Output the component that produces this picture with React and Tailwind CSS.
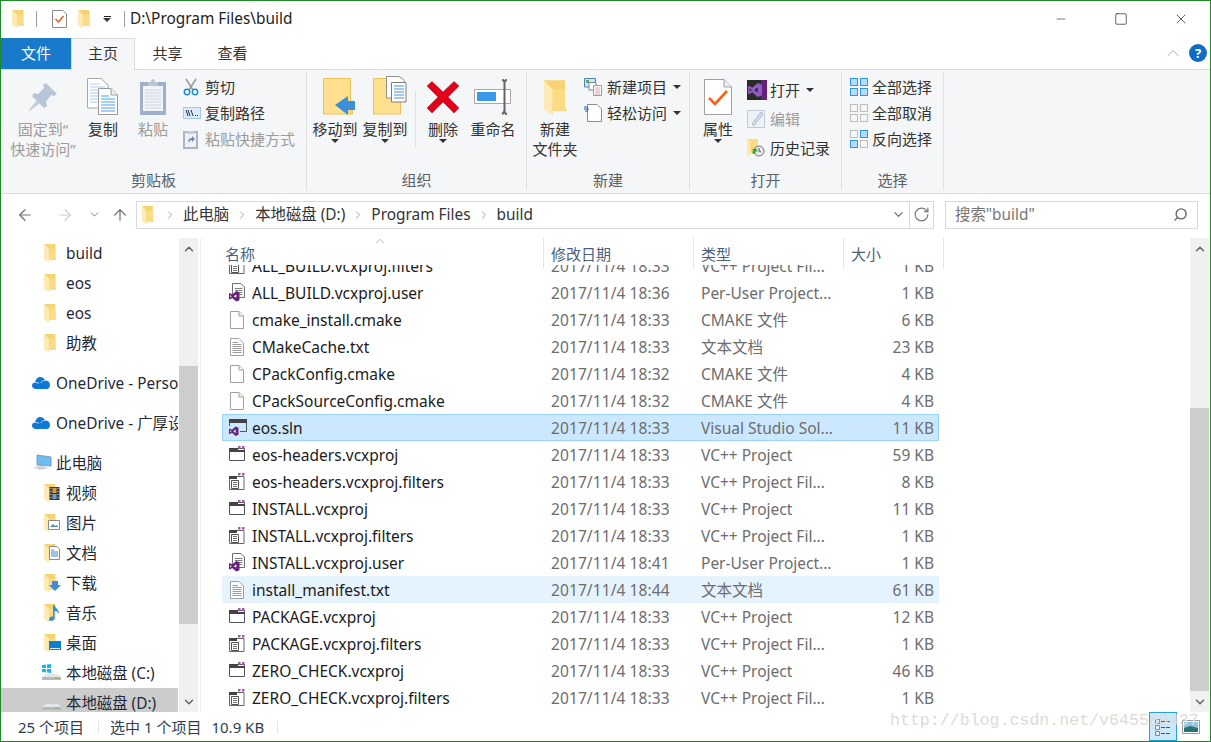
import { ChevronUp, ChevronDown, ChevronRight, ArrowLeft, ArrowRight, ArrowUp, RotateCw, Search, Minus, Square, X } from "lucide-react";

const files = [
  ["filters", "ALL_BUILD.vcxproj.filters", "2017/11/4 18:33", "VC++ Project Fil...", "1 KB"],
  ["user", "ALL_BUILD.vcxproj.user", "2017/11/4 18:36", "Per-User Project...", "1 KB"],
  ["plain", "cmake_install.cmake", "2017/11/4 18:33", "CMAKE 文件", "6 KB"],
  ["text", "CMakeCache.txt", "2017/11/4 18:33", "文本文档", "23 KB"],
  ["plain", "CPackConfig.cmake", "2017/11/4 18:32", "CMAKE 文件", "4 KB"],
  ["plain", "CPackSourceConfig.cmake", "2017/11/4 18:32", "CMAKE 文件", "4 KB"],
  ["sln", "eos.sln", "2017/11/4 18:33", "Visual Studio Sol...", "11 KB", "selected"],
  ["proj", "eos-headers.vcxproj", "2017/11/4 18:33", "VC++ Project", "59 KB"],
  ["filters", "eos-headers.vcxproj.filters", "2017/11/4 18:33", "VC++ Project Fil...", "8 KB"],
  ["proj", "INSTALL.vcxproj", "2017/11/4 18:33", "VC++ Project", "11 KB"],
  ["filters", "INSTALL.vcxproj.filters", "2017/11/4 18:33", "VC++ Project Fil...", "1 KB"],
  ["user", "INSTALL.vcxproj.user", "2017/11/4 18:41", "Per-User Project...", "1 KB"],
  ["text", "install_manifest.txt", "2017/11/4 18:44", "文本文档", "61 KB", "hover"],
  ["proj", "PACKAGE.vcxproj", "2017/11/4 18:33", "VC++ Project", "12 KB"],
  ["filters", "PACKAGE.vcxproj.filters", "2017/11/4 18:33", "VC++ Project Fil...", "1 KB"],
  ["proj", "ZERO_CHECK.vcxproj", "2017/11/4 18:33", "VC++ Project", "46 KB"],
  ["filters", "ZERO_CHECK.vcxproj.filters", "2017/11/4 18:33", "VC++ Project Fil...", "1 KB"],
];

function Folder({ className = "w-[13px] h-[18px]" }) {
  return (
    <svg viewBox="0 0 68 102" className={className}>
      <path d="M0 0H62V80L68 90H25V102L0 86Z" fill="#f6d473" />
      <path d="M25 27H62V80L68 90H25Z" fill="#fbdc85" />
      <path d="M0 0L25 27V102L0 86Z" fill="#fdeab4" />
    </svg>
  );
}

function VsMark({ x = 0, y = 0, s = 1, color = "#68217a" }) {
  return (
    <path
      transform={`translate(${x} ${y}) scale(${s})`}
      d="M7 0L10 1.2V8.8L7 10L3 6.6L1 8L0 7.5V2.5L1 2L3 3.4ZM7 3L4.6 5L7 7ZM1.2 3.8V6.2L2.6 5Z"
      fill={color}
    />
  );
}

function FileIcon({ kind }) {
  const page = (
    <path d="M3.5 1.5H12L16.5 6V18.5H3.5Z" fill="#fff" stroke="#a0a0a0" />
  );
  const dots = <path d="M11 1h2.500v2.500H11ZM15 1h2.500v2.500H15Z" fill="#a25da8" />;
  if (kind === "plain")
    return <svg viewBox="0 0 20 20" className="w-5 h-5">{page}<path d="M12 1.5V6H16.5" fill="#f2f2f2" stroke="#a0a0a0" /></svg>;
  if (kind === "text")
    return (
      <svg viewBox="0 0 20 20" className="w-5 h-5">
        {page}
        <path d="M5.5 5.5H11M5.5 7.5H14.5M5.5 9.5H14.5M5.5 11.5H14.5M5.5 13.5H14.5M5.5 15.5H14.5" stroke="#9a9a9a" />
      </svg>
    );
  if (kind === "user")
    return (
      <svg viewBox="0 0 20 20" className="w-5 h-5">
        <path d="M5.5 .5H14L17.500 4V14.500H5.5Z" fill="#fff" stroke="#6f6f6f" />
        <path d="M8 5.500H15.500M8 7.500H15.500M11 9.500H15.500M12 11.500H15.500" stroke="#808080" />
        <VsMark x={2} y={8} s={1.05} />
      </svg>
    );
  if (kind === "sln")
    return (
      <svg viewBox="0 0 20 20" className="w-5 h-5">
        <path d="M2.5 1.500H19.500V13.500H13M2.5 1.500V8" fill="none" stroke="#555" />
        <path d="M2 1H20V5H2Z" fill="#444" />
        <VsMark x={2} y={8.500} s={0.95} />
      </svg>
    );
  if (kind === "proj")
    return (
      <svg viewBox="0 0 20 20" className="w-5 h-5">
        <path d="M2.5 3.500H17.500V15.500H2.5Z" fill="#fff" stroke="#555" />
        <path d="M2 3H11V5H18V7H2Z" fill="#444" />
        {dots}
      </svg>
    );
  return (
    <svg viewBox="0 0 20 20" className="w-5 h-5">
      <path d="M2.5 4.500H17V17.500H2.5Z" fill="#fff" stroke="#666" />
      <path d="M2 4H10V7H2Z" fill="#444" />
      <path d="M4.500 8.500H11.500V16.500H4.500Z" fill="#fff" stroke="#555" />
      <path d="M6 10.500H10M6 12.500H10M6 14.500H10" stroke="#777" />
      {dots}
    </svg>
  );
}

function Caret({ className = "" }) {
  return <span className={`inline-block w-0 h-0 border-x-[4px] border-x-transparent border-t-[4px] border-t-[#333] ${className}`} />;
}

function PinIcon() {
  return (
    <svg viewBox="0 0 30 30" className="w-[30px] h-[30px]">
      <path d="M18 1L29 12L26 14L23 13L18 20L19 24L16 26L4 14L6 11L10 12L16 6L15 3Z" fill="#b9c5d6" />
      <path d="M9 18L12 21L2 29L1 28Z" fill="#c3cedc" />
    </svg>
  );
}

function CopyIcon() {
  return (
    <svg viewBox="0 0 32 38" className="w-8 h-[38px]">
      <path d="M.5.5H14L21 7V30H.5Z" fill="#fff" stroke="#a8a8a8" />
      <path d="M3 6H12M3 9H18M3 12H18M3 15H18M3 18H18M3 21H18M3 24H18" stroke="#b0cdf0" />
      <path d="M11.5 10.5H24L30.5 17V36.5H11.5Z" fill="#fff" stroke="#9a9a9a" />
      <path d="M24 10.5V17H30.5" fill="#eef2f6" stroke="#9a9a9a" />
      <path d="M14 18H22M14 21H28M14 24H28M14 27H28M14 30H28M14 33H28" stroke="#4b9cf0" />
    </svg>
  );
}

function PasteIcon() {
  return (
    <svg viewBox="0 0 28 38" className="w-7 h-[38px]">
      <path d="M1 4H27V37H1Z" fill="#9fb0cb" />
      <path d="M4 8H24V33H4Z" fill="#f1f3f7" />
      <path d="M9 4H12C12 0 16 0 16 4H19V8H9Z" fill="#bcc5d4" />
      <path d="M6 12H22M6 15H22M6 18H22M6 21H22M6 24H22M6 27H22M6 30H22" stroke="#ccd5e2" />
    </svg>
  );
}

function ScissorsIcon() {
  return (
    <svg viewBox="0 0 16 18" className="w-4 h-[18px]">
      <path d="M3 1L10 12M13 1L6 12" stroke="#9a9a9a" strokeWidth="1.5" fill="none" />
      <circle cx="4" cy="14" r="2.7" fill="none" stroke="#1f8ed0" strokeWidth="1.5" />
      <circle cx="12" cy="14" r="2.7" fill="none" stroke="#1f8ed0" strokeWidth="1.5" />
    </svg>
  );
}

function CopyPathIcon() {
  return (
    <svg viewBox="0 0 18 12" className="w-[18px] h-3">
      <path d="M0 0H18V12H0Z" fill="#a6c8e6" />
      <path d="M1 1H17V11H1Z" fill="#dbeaf8" />
      <path d="M3 3L5 9M5 3L7 9M8 3L10 9" stroke="#20364f" fill="none" />
      <path d="M12 8.5h1M14 8.5h1" stroke="#20364f" />
    </svg>
  );
}

function ShortcutIcon() {
  return (
    <svg viewBox="0 0 15 20" className="w-[15px] h-5">
      <path d="M0 2H15V20H0Z" fill="#aab6c8" />
      <path d="M2 4H13V18H2Z" fill="#eef1f5" />
      <path d="M4 2H11V5H4Z" fill="#c3ccd8" />
      <path d="M5 14C5 10 7 9 9 9V7L12 10L9 13V11C7.500 11 6 12 5 14Z" fill="#7a879b" />
    </svg>
  );
}

function MoveIcon() {
  return (
    <svg viewBox="-9 0 42 38" className="w-[42px] h-[38px]">
      <path d="M.5.5H27.500V36H.5Z" fill="#fee08e" stroke="#eac258" />
      <path d="M27 31H29.500V36H27Z" fill="#fbd56f" stroke="#eac258" />
      <path d="M12 27L25 18V23H32V32H25V37Z" fill="#3b8fd8" />
    </svg>
  );
}

function CopyToIcon() {
  return (
    <svg viewBox="-9 0 42 38" className="w-[42px] h-[38px] overflow-visible">
      <path d="M.5.5H27.500V36H.5Z" fill="#fee08e" stroke="#eac258" />
      <path d="M13.500 -1.500H26L31 2V20H13.500Z" fill="#fff" stroke="#909090" />
      <path d="M18.500 4.500H33V24H18.500Z" fill="#fff" stroke="#7c7c7c" />
      <path d="M21 8H31M21 11H31M21 14H31M21 17H31M21 20H31" stroke="#4b8fd8" />
    </svg>
  );
}

function DeleteIcon() {
  return (
    <svg viewBox="0 0 32 32" className="w-8 h-8">
      <path d="M5 0.500L16 11L27 0.500L32 5L21 16L32 27L27 32L16 21L5 32L0 27L11 16L0 5Z" fill="#e2001a" stroke="#8c2020" strokeWidth=".5" />
    </svg>
  );
}

function RenameIcon() {
  return (
    <svg viewBox="0 0 38 36" className="w-[38px] h-9">
      <path d="M.5 10.500H36.500V24.500H.5Z" fill="#fff" stroke="#a8a8a8" />
      <path d="M3 13H22V22H3Z" fill="#3b99ec" />
      <path d="M28 1C30 1 30.500 2 30.500 4V31C30.500 33 30 34 28 35M33 1C31 1 30.500 2 30.500 4M33 35C31 35 30.500 33 30.500 31" fill="none" stroke="#666" strokeWidth="2" />
    </svg>
  );
}

function NewItemIcon() {
  return (
    <svg viewBox="0 0 18 18" className="w-[18px] h-[18px]">
      <path d="M.5.5H11.500V9H.5Z" fill="#cfe4f5" stroke="#4f84a8" />
      <path d="M2 2H5V5H2Z" fill="#6f9f6f" />
      <path d="M5 4.500H12V12H5Z" fill="#fff" stroke="#7f8b98" />
      <path d="M9.500 7.500H17.500V17.500H9.500Z" fill="#fff" stroke="#9a9a9a" />
      <path d="M11 10H16M11 12H16M11 14H16M11 16H16" stroke="#d9a0a0" />
    </svg>
  );
}

function EasyAccessIcon() {
  return (
    <svg viewBox="0 0 18 18" className="w-[18px] h-[18px]">
      <path d="M3.500.5H13L17.500 5V17.500H3.500Z" fill="#fff" stroke="#8c8c8c" />
      <path d="M0 3H4M0 5H5M1 7H4" stroke="#1f5fa8" />
    </svg>
  );
}

function PropertiesIcon() {
  return (
    <svg viewBox="0 0 28 36" className="w-7 h-9">
      <path d="M.5.5H20L27.500 8V35.500H.5Z" fill="#fff" stroke="#a0a0a0" />
      <path d="M20 .5V8H27.500" fill="#eceff2" stroke="#a0a0a0" />
      <path d="M5 19L11 25L23 12" fill="none" stroke="#f0641e" strokeWidth="2.600" />
    </svg>
  );
}

function VsBoxIcon() {
  return (
    <svg viewBox="0 0 20 20" className="w-5 h-5">
      <path d="M0 0H20V20H0Z" fill="#2b2b2b" />
      <path d="M14 0H20V20H14Z" fill="#68217a" />
      <VsMark x={1} y={3} s={1.4} color="#8f5cc4" />
    </svg>
  );
}

function EditIcon() {
  return (
    <svg viewBox="0 0 18 18" className="w-[18px] h-[18px]">
      <path d="M.5.5H17.500V17.500H.5Z" fill="#eef2f7" stroke="#bfc9d8" />
      <path d="M5 14L14 2L16 4L7 15.500Z" fill="#d3deec" stroke="#a9b9cc" />
    </svg>
  );
}

function HistoryIcon() {
  return (
    <svg viewBox="0 0 18 18" className="w-[18px] h-[18px]">
      <path d="M0 0H11V14H3V18L0 15Z" fill="#fbdc85" />
      <path d="M0 0L3 3V18L0 15Z" fill="#fdeab4" />
      <circle cx="12" cy="12" r="5" fill="#e9e9e9" stroke="#777" />
      <path d="M12 9V12L14 13" stroke="#555" fill="none" />
      <path d="M8 9L11 12H9V15H6V12H4Z" transform="rotate(20 8 12)" fill="#3aa53a" />
    </svg>
  );
}

function GridIcon({ mode }) {
  const blue = "#b5dcfb";
  const edge = "#2f93e6";
  const grey = "#bdbdbd";
  const cell = (x, y, on) => (
    <rect key={`${x}${y}`} x={x + 0.5} y={y + 0.5} width="7" height="7" fill={on ? blue : "#f5f6f7"} stroke={on ? edge : grey} />
  );
  const on = mode === "all" ? [1, 1, 1, 1] : mode === "none" ? [0, 0, 0, 0] : [0, 1, 1, 0];
  return (
    <svg viewBox="0 0 18 18" className="w-[18px] h-[18px]">
      {cell(0, 0, on[0])}
      {cell(10, 0, on[1])}
      {cell(0, 10, on[2])}
      {cell(10, 10, on[3])}
    </svg>
  );
}

function BigButton({ width, icon, lines, caret, muted }) {
  return (
    <div className={`flex flex-col items-center shrink-0 ${muted ? "text-[#9b9b9b]" : "text-[#333]"}`} style={{ width }}>
      <div className="h-[46px] w-full flex items-center justify-center pt-[2px]">{icon}</div>
      {lines.map((l) => (
        <div key={l} className="h-5 leading-5 whitespace-nowrap text-[15px]">{l}</div>
      ))}
      {caret && <Caret />}
    </div>
  );
}

function SmallRow({ icon, label, caret, height = 26, muted, iconWidth = 22 }) {
  return (
    <div className={`flex items-center whitespace-nowrap ${muted ? "text-[#9b9b9b]" : "text-[#333]"}`} style={{ height }}>
      <div className="flex justify-start shrink-0" style={{ width: iconWidth }}>{icon}</div>
      <span>{label}</span>
      {caret && <Caret className="ml-[6px]" />}
    </div>
  );
}

function Group({ width, label, children }) {
  return (
    <div className="flex flex-col shrink-0 h-[118px] border-r border-[#dfe0e2]" style={{ width }}>
      <div className="flex h-[98px] pt-[1px]">{children}</div>
      <div className="text-center text-[#5c6066] h-5 leading-5">{label}</div>
    </div>
  );
}

function Ribbon() {
  return (
    <div className="h-[125px] bg-[#f5f6f7] border-y border-[#dadbdc] pt-[2px] flex">
      <Group width={306} label="剪贴板">
        <div className="w-[7px]" />
        <BigButton width={70} muted icon={<PinIcon />} lines={["固定到“", "快速访问”"]} />
        <BigButton width={50} icon={<CopyIcon />} lines={["复制"]} />
        <BigButton width={50} muted icon={<PasteIcon />} lines={["粘贴"]} />
        <div className="ml-[5px] pt-[1px]">
          <SmallRow icon={<ScissorsIcon />} label="剪切" />
          <SmallRow icon={<CopyPathIcon />} label="复制路径" />
          <SmallRow muted icon={<ShortcutIcon />} label="粘贴快捷方式" />
        </div>
      </Group>
      <Group width={220} label="组织">
        <div className="w-[3px]" />
        <BigButton width={50} icon={<MoveIcon />} lines={["移动到"]} caret />
        <BigButton width={50} icon={<CopyToIcon />} lines={["复制到"]} caret />
        <div className="w-px h-[56px] mt-[18px] ml-[5px] mr-[3px] bg-[#e0e1e3]" />
        <BigButton width={48} icon={<DeleteIcon />} lines={["删除"]} caret />
        <BigButton width={52} icon={<RenameIcon />} lines={["重命名"]} />
      </Group>
      <Group width={163} label="新建">
        <div className="w-[3px]" />
        <BigButton width={50} icon={<Folder className="w-[23px] h-[35px]" />} lines={["新建", "文件夹"]} />
        <div className="ml-[4px] pt-[1px]">
          <SmallRow iconWidth={23} icon={<NewItemIcon />} label="新建项目" caret />
          <SmallRow iconWidth={23} icon={<EasyAccessIcon />} label="轻松访问" caret />
        </div>
      </Group>
      <Group width={152} label="打开">
        <div className="w-[5px]" />
        <BigButton width={46} icon={<PropertiesIcon />} lines={["属性"]} caret />
        <div className="ml-[6px] pt-[2px] w-[92px]">
          <SmallRow iconWidth={23} height={29} icon={<VsBoxIcon />} label="打开" caret />
          <SmallRow iconWidth={23} height={29} muted icon={<EditIcon />} label="编辑" />
          <SmallRow iconWidth={23} height={30} icon={<HistoryIcon />} label="历史记录" />
        </div>
      </Group>
      <Group width={102} label="选择">
        <div className="ml-[8px] pt-[1px]">
          <SmallRow icon={<GridIcon mode="all" />} label="全部选择" />
          <SmallRow icon={<GridIcon mode="none" />} label="全部取消" />
          <SmallRow icon={<GridIcon mode="invert" />} label="反向选择" />
        </div>
      </Group>
    </div>
  );
}

function TitleBar() {
  return (
    <div className="h-[37px] flex items-center pb-[1px]">
      <div className="ml-[11px]"><Folder /></div>
      <div className="w-px h-4 bg-[#a0a0a0] ml-[11px]" />
      <svg viewBox="0 0 15 18" className="w-[15px] h-[18px] ml-[15px]">
        <path d="M.5.5H11L14.500 4V17.500H.5Z" fill="#fff" stroke="#8a8a8a" />
        <path d="M3.500 9L6.500 12L11.500 6" fill="none" stroke="#e8561e" strokeWidth="1.500" />
      </svg>
      <div className="ml-[11px]"><Folder /></div>
      <div className="ml-[12px] flex flex-col items-center">
        <div className="w-[7px] h-px bg-[#222] mb-[1px]" />
        <Caret />
      </div>
      <div className="w-px h-4 bg-[#a0a0a0] ml-[13px]" />
      <div className="ml-[5px] text-[#222] text-[15.400px]">D:\Program Files\build</div>
      <div className="ml-auto flex items-center">
        <Minus size={14} strokeWidth={1} className="text-[#111] mr-[46px] scale-x-[.95]" />
        <Square size={14} strokeWidth={1.1} className="text-[#111] mr-[45px]" />
        <X size={16} strokeWidth={1} className="text-[#111] mr-[21px]" />
      </div>
    </div>
  );
}

function Tabs() {
  return (
    <div className="h-[31px] flex items-stretch text-[15px]">
      <div className="w-[70px] bg-[#1979ca] text-white flex items-center justify-center pb-[2px]">文件</div>
      <div className="w-[64px] h-[32px] z-10 bg-[#f5f6f7] border-x border-t border-[#dadbdc] flex items-center justify-center text-[#333] pb-[3px]">主页</div>
      <div className="w-[65px] flex items-center justify-center text-[#333] pb-[2px]">共享</div>
      <div className="w-[65px] flex items-center justify-center text-[#333] pb-[2px]">查看</div>
      <div className="ml-auto flex items-center pr-[3px] pb-[1px]">
        <ChevronUp size={20} strokeWidth={1} className="text-[#999] mr-[6px]" />
        <div className="w-[18px] h-[18px] rounded-full bg-[#0f6cc4] text-white text-[13px] font-bold flex items-center justify-center">?</div>
      </div>
    </div>
  );
}

function Crumb({ children }) {
  return (
    <>
      <ChevronRight size={12} strokeWidth={1.6} className="text-[#888] mx-[1px]" />
      <span className="mx-[6px] text-[#333]">{children}</span>
    </>
  );
}

function AddressBar() {
  return (
    <div className="h-[44px] flex items-center pb-[3px] text-[15.400px]">
      <ArrowLeft size={18} strokeWidth={1.6} className="text-[#707070] ml-[15px]" />
      <ArrowRight size={18} strokeWidth={1.6} className="text-[#cfcfcf] ml-[22px]" />
      <ChevronDown size={13} strokeWidth={1.8} className="text-[#808080] ml-[14px]" />
      <ArrowUp size={18} strokeWidth={1.6} className="text-[#707070] ml-[10px]" />
      <div className="w-[798px] h-[28px] ml-[7px] border border-[#d9d9d9] flex items-center">
        <div className="ml-[5px] mr-[9px]"><Folder className="w-[12px] h-[18px]" /></div>
        <Crumb>此电脑</Crumb>
        <Crumb>本地磁盘 (D:)</Crumb>
        <Crumb>Program Files</Crumb>
        <Crumb>build</Crumb>
        <ChevronDown size={15} strokeWidth={1.8} className="text-[#666] ml-auto mr-[3px]" />
        <div className="w-[24px] h-full border-l border-[#d9d9d9] flex items-center justify-center">
          <RotateCw size={17} strokeWidth={1.7} className="text-[#777]" />
        </div>
      </div>
      <div className="w-[253px] h-[28px] ml-[11px] border border-[#d9d9d9] flex items-center pl-[9px] text-[#777]">
        搜索"build"
        <Search size={15} strokeWidth={2.2} className="text-[#666] ml-auto mr-[9px] -scale-x-100" />
      </div>
    </div>
  );
}

function NavRow({ icon, label, indent = 43, textLeft = 65, selected, top = 0 }) {
  return (
    <div className={`h-[30px] flex items-center shrink-0 whitespace-nowrap overflow-hidden text-[#1f2a38] ${selected ? "bg-[#cccccc]" : ""}`} style={{ marginTop: top }}>
      <div className="shrink-0" style={{ marginLeft: indent, width: textLeft - indent }}>{icon}</div>
      <span className="mt-[2px]">{label}</span>
    </div>
  );
}

function LibraryFolder({ children }) {
  return (
    <div className="relative w-[18px] h-[18px]">
      <Folder />
      {children}
    </div>
  );
}

function DriveIcon({ win }) {
  return (
    <svg viewBox="0 0 20 20" className="w-5 h-5">
      {win && <path d="M1 2L5 1.500V5H1ZM6 1.400L10 1V5H6ZM1 6H5V9.500L1 9ZM6 6H10V10L6 9.600Z" fill="#14b4f0" />}
      <path d="M1 14L5 11H17L20 14V17H1Z" fill="#e6e6e6" />
      <path d="M1 14H20V17H1Z" fill="#b9b9b9" />
      <path d="M14 15H18" stroke="#6fc24a" />
    </svg>
  );
}

function Cloud() {
  return (
    <svg viewBox="0 0 18 12" className="w-[18px] h-3">
      <path d="M4 12C1 12 0 10 0 8.500C0 6.500 1.500 5.500 3 5.500C3.500 2 6 0 8.500 0C10.500 0 12.500 1.500 13 3.500C15.500 3 18 5 18 8C18 10.500 16.500 12 14.500 12Z" fill="#0f78d4" />
      <path d="M3 5.500C5 5 6.500 6 7 7M13 3.500C11 3.500 9.500 4.500 9 6" stroke="#fff" strokeWidth=".7" fill="none" />
    </svg>
  );
}

function Sidebar() {
  return (
    <div className="w-[177px] mr-px shrink-0 overflow-hidden flex flex-col text-[15.400px]">
      <NavRow icon={<Folder />} label="build" />
      <NavRow icon={<Folder />} label="eos" />
      <NavRow icon={<Folder />} label="eos" />
      <NavRow icon={<Folder />} label="助教" />
      <NavRow top={10} indent={31} textLeft={55} icon={<Cloud />} label="OneDrive - Personal" />
      <NavRow top={10} indent={31} textLeft={55} icon={<Cloud />} label="OneDrive - 广厚设计" />
      <NavRow
        top={10}
        indent={31}
        textLeft={55}
        label="此电脑"
        icon={
          <svg viewBox="0 0 20 18" className="w-5 h-[18px]">
            <path d="M5 1L19 3V12L5 11Z" fill="#6dbdf0" stroke="#7f9fb8" />
            <path d="M1 13L10 12L17 14L8 16Z" fill="#cfd3d8" />
          </svg>
        }
      />
      <NavRow
        label="视频"
        icon={
          <LibraryFolder>
            <svg viewBox="0 0 10 13" className="absolute left-[5px] top-[3px] w-[11px] h-[13px]">
              <path d="M0 0H10V13H0Z" fill="#3b3b3b" />
              <path d="M1 1H2V2H1ZM1 4H2V5H1ZM1 7H2V8H1ZM1 10H2V11H1ZM8 1H9V2H8ZM8 4H9V5H8ZM8 7H9V8H8ZM8 10H9V11H8Z" fill="#ddd" />
              <path d="M3 1H7V6H3Z" fill="#d79b3c" />
              <path d="M3 7H7V12H3Z" fill="#6d9fc4" />
            </svg>
          </LibraryFolder>
        }
      />
      <NavRow
        label="图片"
        icon={
          <LibraryFolder>
            <svg viewBox="0 0 12 10" className="absolute left-[4px] top-[6px] w-3 h-[10px]">
              <path d="M.5.5H11.500V9.500H.5Z" fill="#fff" stroke="#8a8a8a" />
              <path d="M2 7L5 4L7 6L9 5L10 7Z" fill="#4c8fb8" />
            </svg>
          </LibraryFolder>
        }
      />
      <NavRow
        label="文档"
        icon={
          <LibraryFolder>
            <svg viewBox="0 0 11 14" className="absolute left-[5px] top-[2px] w-[11px] h-[14px]">
              <path d="M.5.5H8L10.500 3V13.500H.5Z" fill="#fff" stroke="#8a8a8a" />
              <path d="M2 4H5M2 6H9M2 8H9M2 10H9" stroke="#3e86cc" />
            </svg>
          </LibraryFolder>
        }
      />
      <NavRow
        label="下载"
        icon={
          <LibraryFolder>
            <svg viewBox="0 0 12 10" className="absolute left-[5px] top-[7px] w-3 h-[10px]">
              <path d="M3 0H9V4H12L6 10L0 4H3Z" fill="#3f8bd8" />
            </svg>
          </LibraryFolder>
        }
      />
      <NavRow
        label="音乐"
        icon={
          <LibraryFolder>
            <svg viewBox="0 0 11 16" className="absolute left-[5px] top-[1px] w-[11px] h-4">
              <path d="M4 0H5.500C5.500 3 10.500 4 10 9C9 6.500 7 6 5.500 6V13C5.500 15 3.500 16 2 16C.5 16 0 15 0 14C0 12.500 2 11 4 11.500Z" fill="#2e8fe0" />
            </svg>
          </LibraryFolder>
        }
      />
      <NavRow
        label="桌面"
        icon={
          <LibraryFolder>
            <svg viewBox="0 0 12 9" className="absolute left-[5px] top-[7px] w-3 h-[9px]">
              <path d="M0 0H12V9H0Z" fill="#0f7fd0" />
              <path d="M1 7H11V8H1Z" fill="#d8ecfa" />
            </svg>
          </LibraryFolder>
        }
      />
      <NavRow indent={40} textLeft={65} icon={<DriveIcon win />} label="本地磁盘 (C:)" />
      <NavRow selected indent={40} textLeft={65} icon={<DriveIcon />} label="本地磁盘 (D:)" />
    </div>
  );
}

function Scrollbar({ before, thumb }) {
  return (
    <div className="w-[19px] shrink-0 bg-[#f0f0f0] flex flex-col items-stretch">
      <div className="h-[22px] flex items-center justify-center">
        <ChevronUp size={14} strokeWidth={2.4} className="text-[#606060]" />
      </div>
      <div style={{ height: before }} />
      <div className="bg-[#cdcdcd]" style={{ height: thumb }} />
      <div className="flex-1" />
      <div className="h-[21px] flex items-center justify-center">
        <ChevronDown size={14} strokeWidth={2.4} className="text-[#606060]" />
      </div>
    </div>
  );
}

function HeaderCell({ label, width, pad = 7 }) {
  return (
    <div className="flex shrink-0 h-[31px]" style={{ width }}>
      <span className="flex-1 pt-[4px] text-[#4c607a] relative z-10 leading-6" style={{ paddingLeft: pad }}>{label}</span>
      <div className="w-px h-full bg-[#e5e5e5] relative z-10" />
    </div>
  );
}

function FileRow({ kind, name, date, type, size, state }) {
  const tone =
    state === "selected"
      ? "bg-[#cce8ff] border-[#99d1ff]"
      : state === "hover"
      ? "bg-[#e5f3ff] border-[#e5f3ff]"
      : "border-transparent";
  return (
    <div className={`h-[27px] w-[717px] flex items-center border ${tone} whitespace-nowrap text-[15.500px]`}>
      <div className="w-[29px] pl-[4px] shrink-0"><FileIcon kind={kind} /></div>
      <div className="w-[299px] shrink-0 text-[#1b1b1b]">{name}</div>
      <div className="w-[150px] shrink-0 text-[#6d6d6d] tracking-[0.1px]">{date}</div>
      <div className="w-[140px] shrink-0 text-[#6d6d6d]">{type}</div>
      <div className="w-[93px] shrink-0 text-right text-[#6d6d6d]">{size}</div>
    </div>
  );
}

function FileList() {
  return (
    <div className="flex-1 min-w-0 flex flex-col overflow-hidden">
      <div className="h-[27px] shrink-0 flex pl-[18px] relative z-10 bg-white">
        <div className="relative flex">
          <HeaderCell label="名称" width={325} pad={6} />
          <ChevronUp size={14} strokeWidth={1} className="absolute left-[154px] top-[-4px] text-[#888]" />
          <HeaderCell label="修改日期" width={150} />
          <HeaderCell label="类型" width={150} />
          <HeaderCell label="大小" width={100} />
        </div>
      </div>
      <div className="pl-[21px] mt-[-13px]">
        {files.map(([kind, name, date, type, size, state]) => (
          <FileRow key={name} kind={kind} name={name} date={date} type={type} size={size} state={state} />
        ))}
      </div>
    </div>
  );
}

function StatusBar() {
  return (
    <div className="h-[29px] shrink-0 flex items-center relative text-[#2c3e55]">
      <span className="ml-[17px]">25 个项目</span>
      <div className="w-px h-[14px] bg-[#e5e5e5] ml-[14px]" />
      <span className="ml-[11px]">选中 1 个项目</span>
      <span className="ml-[10px]">10.9 KB</span>
      <div className="w-px h-[14px] bg-[#e5e5e5] ml-[13px]" />
      <div className="ml-auto flex items-center h-full pr-[10px]">
        <div className="w-[28px] h-full bg-[#cce8ff] border border-[#26a0da] flex items-center justify-center">
          <svg viewBox="0 0 18 20" className="w-[18px] h-5">
            <path d="M1.500 2.500H5.500V6.500H1.500ZM1.500 8.500H5.500V12.500H1.500ZM1.500 14.500H5.500V18.500H1.500Z" fill="#eee" stroke="#888" />
            <path d="M7 4.500H17M7 10.500H17M7 16.500H17" stroke="#555" strokeDasharray="4 1" />
          </svg>
        </div>
        <svg viewBox="0 0 18 14" className="w-[18px] h-[14px] ml-[5px]">
          <path d="M.5.5H17.500V13.500H.5Z" fill="#fff" stroke="#999" />
          <path d="M2 2H16V8H2Z" fill="#8cc4e8" />
          <path d="M2 8L8 6L16 8V12H2Z" fill="#2f6f70" />
        </svg>
      </div>
      <div className="absolute left-[889px] top-[-1px] font-['Liberation_Mono',monospace] text-[16.600px] text-[#dcdcd6] pointer-events-none whitespace-nowrap">
        http://blog.csdn.net/v645589437
      </div>
    </div>
  );
}

export default function App() {
  return (
    <div className="w-[1211px] h-[742px] box-border border border-[#1f8a2a] bg-white overflow-hidden flex flex-col text-[15px] leading-5 font-['Noto_Sans','Noto_Sans_CJK_SC',sans-serif]">
      <TitleBar />
      <Tabs />
      <Ribbon />
      <AddressBar />
      <div className="flex-1 min-h-0 flex">
        <Sidebar />
        <Scrollbar before={106} thumb={258} />
        <div className="w-[3px] shrink-0 border-r border-[#f0f0f0]" />
        <FileList />
        <Scrollbar before={148} thumb={283} />
        <div className="w-px shrink-0" />
      </div>
      <StatusBar />
    </div>
  );
}
